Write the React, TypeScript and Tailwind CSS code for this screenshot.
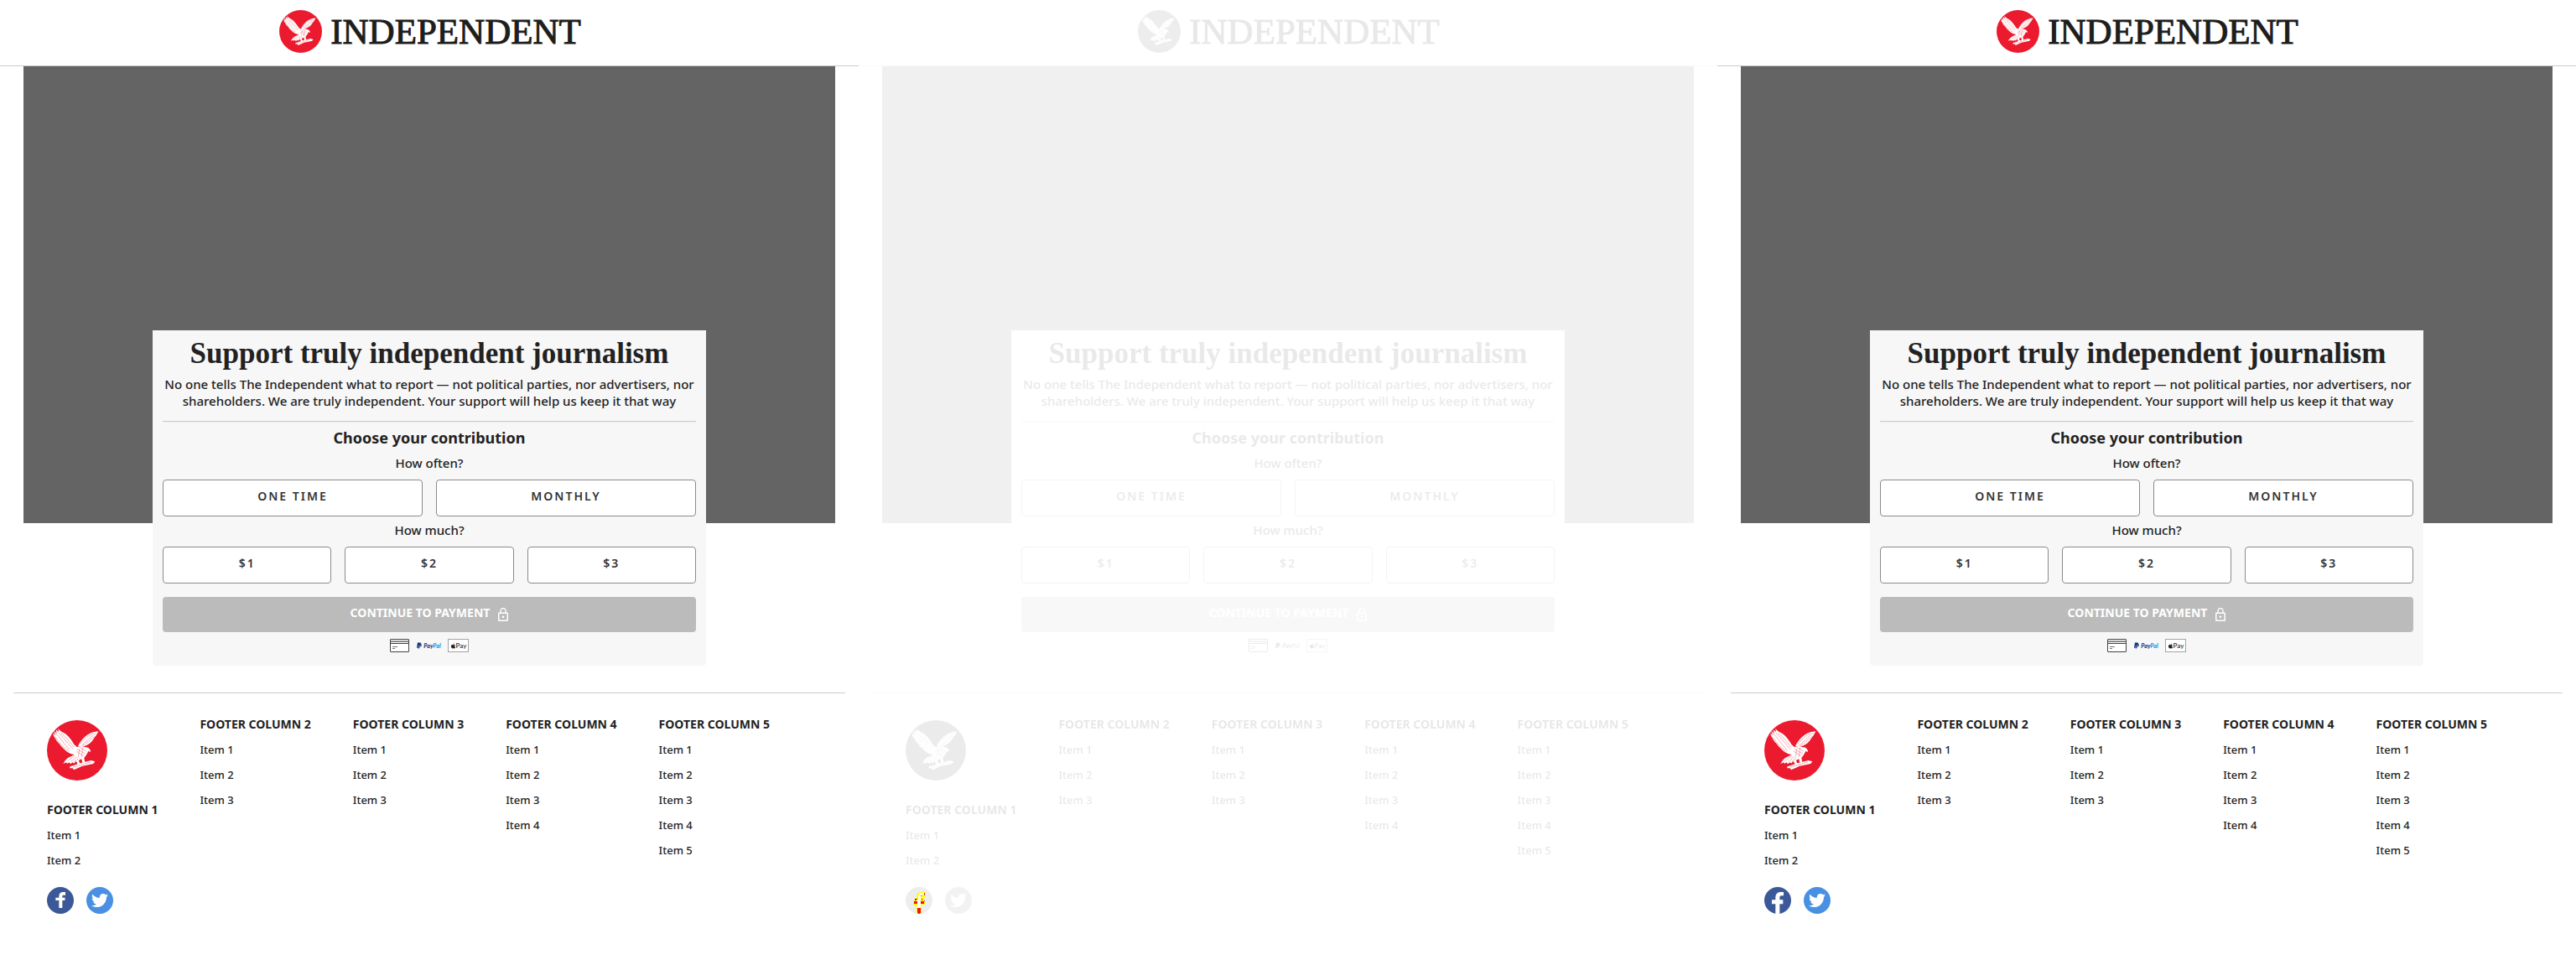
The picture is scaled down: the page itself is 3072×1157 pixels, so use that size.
import { useId } from 'react';
import type { ReactNode } from 'react';
import { FaApple, FaPaypal, FaTwitter } from 'react-icons/fa';

type Variant = 'before' | 'diff' | 'after';

const footerColumns = [
  { title: 'Footer column 2', items: 3 },
  { title: 'Footer column 3', items: 3 },
  { title: 'Footer column 4', items: 4 },
  { title: 'Footer column 5', items: 5 },
];

function EagleBadge({ className }: { className: string }) {
  return (
    <svg viewBox="0 0 216 216" className={className} aria-hidden="true">
      <circle cx="108" cy="108" r="108" fill="#ec1a2e" />
      <g fill="#fff">
        <path d="M40 30 C46 38 52 42 60 45 C76 54 90 74 98 88 L110 98 L108 124 L92 122 C82 120 72 114 66 108 L56 98 L50 92 L44 84 L36 76 L30 66 L24 56 L22 46 L30 54 L25 38 L35 48 L32 34 L42 42Z" />
        <path d="M184 40 C170 41 158 44 146 52 C130 62 120 76 111 92 L124 96 C138 92 152 86 162 74 C170 62 178 54 184 40Z" />
        <path d="M102 100 C110 92 126 92 138 97 C146 96 154 102 157 112 L152 113 L148 110 C144 122 136 130 131 138 L112 142 L100 130Z" />
        <path d="M104 120 L86 130 C74 134 66 142 58 156 L70 151 L72 156 L80 151 L84 157 L92 151 L97 155 L102 148 L110 150 L120 138Z" />
        <path d="M104 144 L112 142 L120 158 L110 158Z M124 138 L133 136 L136 150 L127 153Z" />
        <path d="M82 166 L96 162 L112 156 L134 150 L158 144 L172 148 L166 156 L148 160 L126 164 L110 172 L96 178 L92 172 L82 172Z" />
      </g>
      <g fill="none" stroke="#ec1a2e" strokeWidth="1.5" strokeDasharray="5 2">
        <path d="M34 50 C48 64 62 88 84 108 M42 46 C58 60 72 82 94 104 M30 60 C44 80 58 98 80 112 M50 46 C66 58 80 78 98 98" />
        <path d="M176 46 C158 58 146 72 124 90 M170 58 C154 72 144 82 128 92 M166 46 C150 54 136 66 120 84" />
        <path d="M108 104 L138 120 M106 112 L132 128 M118 98 L142 112 M116 104 L112 134 M128 100 L124 132" />
        <path d="M98 128 L74 146 M106 132 L86 148 M112 138 L98 148 M94 168 L156 150" />
      </g>
    </svg>
  );
}

function FacebookIcon({ large }: { large: boolean }) {
  return (
    <svg viewBox="0 0 96 96" className="size-8" aria-hidden="true">
      <circle cx="48" cy="48" r="48" fill="#3b5998" />
      <path
        fill="#fff"
        d={
          large
            ? 'M40 96 V61 H27 V46 H40 V38 C40 25 47 18 59 18 H69 V31 H61 C57 31 55 34 55 39 V46 H67 V61 H55 V96Z'
            : 'M43 75 V48 H31 V38 H43 V33 C43 23 49 18 58 18 H66 V29 H60 C56 29 55 30 55 33 V38 H65 L64 48 H55 V75Z'
        }
      />
    </svg>
  );
}

function FacebookDiffIcon() {
  return (
    <svg viewBox="0 0 96 96" className="size-8" aria-hidden="true">
      <circle cx="48" cy="48" r="48" fill="#ededed" />
      <path fill="#ff0" d="M39 96 V66 H27 V48 H33 V39 H39 V27 H42 V21 H48 V18 H69 V36 H60 V39 H66 V48 H69 V63 H57 V96Z" />
      <path fill="#fff" d="M42 75 V51 H39 V45 H45 V30 H48 V24 H51 V21 H66 V27 H57 V33 H54 V75Z" />
      <path fill="#f01414" d="M66 21 H69 V30 H66Z M54 30 H57 V33 H54Z M33 42 H42 V45 H39 V48 H33Z M30 51 H42 V60 H30Z M54 51 H66 V60 H54Z M57 42 H60 V48 H57Z M66 48 H69 V51 H66Z M42 75 H54 V93 H51 V96 H45 V93 H42Z" />
    </svg>
  );
}

function OptionButton({ children }: { children: ReactNode }) {
  return (
    <button
      type="button"
      className="flex h-11 flex-1 items-center justify-center rounded-sm border border-[#8b8b8b] bg-white pb-1 text-sm font-semibold tracking-[2px] text-[#333]"
    >
      {children}
    </button>
  );
}

function OptionGroup({ label, options, className }: { label: string; options: string[]; className: string }) {
  const id = useId();
  return (
    <div role="group" aria-labelledby={id} className={className}>
      <p id={id} className="text-center text-[15px] leading-5 font-medium">
        {label}
      </p>
      <div className="mt-2.5 flex gap-4">
        {options.map((option) => (
          <OptionButton key={option}>{option}</OptionButton>
        ))}
      </div>
    </div>
  );
}

function PaymentMarks() {
  return (
    <div className="mt-2 flex h-4 items-center justify-center gap-2">
      <svg viewBox="0 0 23 16" className="h-4 w-[23px]" fill="none" aria-hidden="true">
        <rect x="0.5" y="0.5" width="22" height="15" rx="0.5" fill="#fff" stroke="#444" />
        <path d="M1 2.5H22" stroke="#aaa" />
        <path d="M1 3.5H22" stroke="#777" />
        <path d="M1 5.5H22" stroke="#444" />
        <path d="M3 9.5H9M3 11.5H6" stroke="#777" />
      </svg>
      <span className="flex w-[30px] items-center justify-center gap-px font-['Lato',sans-serif] text-[7px] leading-4 font-black italic">
        <FaPaypal className="size-2 shrink-0 text-[#123984]" aria-hidden="true" />
        <span>
          <span className="text-[#253b80]">Pay</span>
          <span className="text-[#179bf0]">Pal</span>
        </span>
      </span>
      <span className="flex h-4 w-[25px] items-center justify-center border border-[#a3a3a3] bg-white font-['Lato',sans-serif] text-[8px] leading-3 font-medium text-[#222]">
        <FaApple className="size-[7px] shrink-0" aria-hidden="true" />
        Pay
      </span>
    </div>
  );
}

function ContributionCard() {
  return (
    <form className="relative mx-auto -mt-[230px] flex w-full max-w-[660px] flex-col rounded-b-sm bg-[#f7f7f7] px-3 pt-1.5 pb-4">
      <h1 className="text-center font-['Liberation_Serif',serif] text-[35px] leading-11 font-bold whitespace-nowrap">
        Support truly independent journalism
      </h1>
      <p className="mt-1 text-center text-[15px] leading-5 font-medium">
        No one tells The Independent what to report — not political parties, nor advertisers, nor shareholders. We are
        truly independent. Your support will help us keep it that way
      </p>
      <hr className="mt-3.5 h-0.5 border-t border-b border-t-[#ccc] border-b-[#eee]" />
      <h2 className="mt-1.5 text-center text-[18px] leading-6 font-bold">Choose your contribution</h2>
      <OptionGroup className="mt-2" label="How often?" options={['ONE TIME', 'MONTHLY']} />
      <OptionGroup className="mt-1.5" label="How much?" options={['$1', '$2', '$3']} />
      <button
        type="submit"
        className="mt-4 flex h-[42px] items-center justify-center gap-2.5 rounded-sm bg-[#bbb] text-sm font-bold text-white"
      >
        <span className="pb-1">CONTINUE TO PAYMENT</span>
        <svg viewBox="0 0 12 16" className="h-4 w-3" fill="none" stroke="#fff" aria-hidden="true">
          <rect x="0.75" y="6.25" width="10.5" height="9" rx="0.5" strokeWidth="1.5" />
          <path d="M3 6V3.5a3 3 0 0 1 6 0V6" strokeWidth="1.3" />
          <circle cx="6" cy="10.7" r="1.3" fill="#fff" stroke="none" />
        </svg>
      </button>
      <PaymentMarks />
    </form>
  );
}

function FooterLinks({ title, items }: { title: string; items: number }) {
  return (
    <>
      <h3 className="text-sm leading-5 font-bold whitespace-nowrap uppercase">{title}</h3>
      <ul className="mt-2.5 flex flex-col gap-2.5">
        {Array.from({ length: items }, (_, i) => (
          <li key={i} className="text-[13px] leading-5 font-medium">
            <a href={`#item-${i + 1}`}>Item {i + 1}</a>
          </li>
        ))}
      </ul>
    </>
  );
}

function Page({ variant }: { variant: Variant }) {
  const fade = variant === 'diff' ? 'opacity-10 grayscale' : '';
  return (
    <section className="min-w-0 font-['Noto_Sans',sans-serif] text-[#222]">
      <div className={fade}>
        <header className="flex justify-center border-b border-[#ccc] pt-3 pb-[15px] pl-0.5">
          <a href="#home" className="flex items-center gap-2.5">
            <EagleBadge className="size-[51px]" />
            <span className="font-['Liberation_Serif',serif] text-[43px] leading-[51px] text-[#1d1d1b] [-webkit-text-stroke:1px_#1d1d1b]">
              INDEPENDENT
            </span>
          </a>
        </header>
        <div className="mx-7 h-[545px] bg-[#646464]" />
        <ContributionCard />
      </div>
      <footer className="mt-8">
        <div className={fade}>
          <div className="mx-4 border-t border-[#ccc]" />
        </div>
        <div className="mx-14 grid grid-cols-5">
          <div className="pt-8">
            <div className={fade}>
              <EagleBadge className="mb-[25px] size-[72px]" />
              <FooterLinks title="Footer column 1" items={2} />
            </div>
            <div className="mt-[22px] flex gap-[15px]">
              <a href="#facebook" aria-label="Facebook">
                {variant === 'diff' ? <FacebookDiffIcon /> : <FacebookIcon large={variant === 'after'} />}
              </a>
              <div className={fade}>
                <a
                  href="#twitter"
                  aria-label="Twitter"
                  className="flex size-8 items-center justify-center rounded-full bg-[#4990e2] text-white"
                >
                  <FaTwitter className="size-5" aria-hidden="true" />
                </a>
              </div>
            </div>
          </div>
          {footerColumns.map((column) => (
            <nav key={column.title} aria-label={column.title} className="pt-[27px]">
              <div className={fade}>
                <FooterLinks {...column} />
              </div>
            </nav>
          ))}
        </div>
      </footer>
    </section>
  );
}

export default function App() {
  return (
    <main className="grid min-h-screen grid-cols-3 bg-white">
      <Page variant="before" />
      <Page variant="diff" />
      <Page variant="after" />
    </main>
  );
}
